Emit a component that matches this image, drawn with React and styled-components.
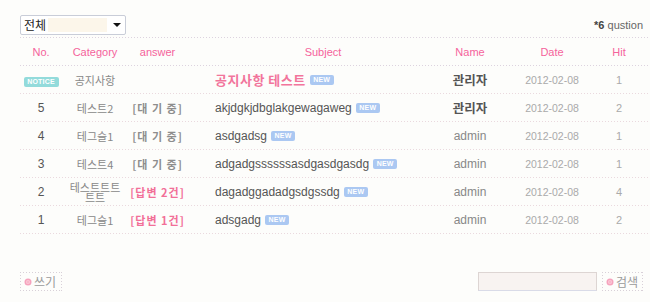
import React from 'react';
import styled, { createGlobalStyle } from 'styled-components';

const GlobalStyle = createGlobalStyle`
  html, body {
    margin: 0;
    padding: 0;
    background: #fdfdfb;
  }
  body {
    font-family: "Liberation Sans", "Noto Sans CJK KR", sans-serif;
    font-size: 12px;
    color: #555;
  }
`;

const dots = color => `linear-gradient(to right, ${color} 1px, transparent 1px)`;

const Page = styled.div`
  width: 628px;
  padding: 15px 2px 0 20px;
`;

const TopBar = styled.div`
  display: flex;
  justify-content: space-between;
  align-items: center;
  height: 20px;
  padding-right: 5px;
  margin-bottom: 2px;
`;

const FakeSelect = styled.div`
  box-sizing: border-box;
  width: 106px;
  height: 20px;
  border: 1px solid #c9cdd8;
  border-radius: 2px;
  background: #fff;
  display: flex;
  align-items: center;
  padding: 0 4px 0 3px;
  font-family: "Noto Sans CJK KR", sans-serif;
  font-size: 12px;
  color: #222;
`;

const SelectLabel = styled.span`
  flex-shrink: 0;
  white-space: nowrap;
  width: 24px;
  line-height: 14px;
`;

const SelectFill = styled.span`
  flex: 1;
  height: 14px;
  background: #fcf6ea;
  margin-right: 6px;
`;

const Arrow = styled.span`
  width: 0;
  height: 0;
  border-left: 4px solid transparent;
  border-right: 4px solid transparent;
  border-top: 4px solid #111;
`;

const Count = styled.div`
  font-size: 11px;
  color: #666;
  b {
    color: #444;
    font-weight: bold;
  }
`;

const Table = styled.div`
  background: ${dots('#ddd3df')} repeat-x top left / 3px 1px;
  padding-top: 1px;
`;

const Row = styled.div`
  display: grid;
  grid-template-columns: 42px 66px 59px 253px 60px 104px 30px;
  align-items: center;
  height: 27px;
  padding-bottom: 1px;
  background: ${p => dots(p.$head ? '#ddd3df' : '#ead9de')} repeat-x bottom left / 3px 1px;
`;

const HeadCell = styled.div`
  text-align: center;
  color: #f5639b;
  font-size: 11px;
  padding-left: ${p => p.$pad || 0}px;
`;

const Cell = styled.div`
  text-align: center;
  color: ${p => p.$color || '#777'};
  font-size: ${p => p.$size || 12}px;
  white-space: nowrap;
`;

const NameText = styled.div`
  text-align: center;
  white-space: nowrap;
  color: ${p => (p.$admin ? '#888' : '#555')};
  font-size: ${p => (p.$admin ? 12 : 12.5)}px;
  font-weight: ${p => (p.$admin ? 'normal' : 'bold')};
  font-family: ${p => (p.$admin ? 'inherit' : '"Noto Sans CJK KR", sans-serif')};
`;

const Category = styled.div`
  text-align: center;
  color: #888;
  font-family: "Noto Sans CJK KR", sans-serif;
  font-size: 11px;
  line-height: 10px;
  padding: 0 3px;
  word-break: break-all;
`;

const Answer = styled.div`
  text-align: center;
  font-family: "Noto Sans CJK KR", sans-serif;
  font-size: 11px;
  font-weight: bold;
  letter-spacing: 1px;
  color: ${p => (p.$done ? '#f26f98' : '#8d8d8d')};
  white-space: nowrap;
`;

const Subject = styled.div`
  display: flex;
  align-items: center;
  gap: 4px;
  padding-left: 28px;
  white-space: nowrap;
  color: ${p => (p.$notice ? '#f2759c' : '#555')};
  font-size: ${p => (p.$notice ? 13 : 12)}px;
  letter-spacing: ${p => (p.$notice ? 0.5 : 0)}px;
  font-weight: ${p => (p.$notice ? 'bold' : 'normal')};
  font-family: ${p => (p.$notice ? '"Noto Sans CJK KR", sans-serif' : 'inherit')};
`;

const Badge = styled.span`
  display: inline-flex;
  align-items: center;
  justify-content: center;
  height: 10px;
  width: ${p => p.$w}px;
  border-radius: 2px;
  background: ${p => p.$bg};
  color: #fff;
  font-family: "Liberation Sans", sans-serif;
  font-size: 7px;
  font-weight: bold;
  letter-spacing: 0.2px;
  line-height: 10px;
`;

const Footer = styled.div`
  display: flex;
  justify-content: space-between;
  align-items: center;
  margin-top: 38px;
  padding-right: 5px;
`;

const SearchGroup = styled.div`
  display: flex;
  align-items: center;
  gap: 5px;
`;

const SearchInput = styled.div`
  box-sizing: border-box;
  width: 119px;
  height: 19px;
  border: 1px solid #ddd5d3;
  border-bottom-color: #d9dbe8;
  background: #f8f3f1;
`;

const DotButton = styled.div`
  box-sizing: border-box;
  height: 19px;
  width: ${p => p.$w}px;
  display: flex;
  align-items: center;
  gap: 2px;
  padding-left: 4px;
  font-family: "Noto Sans CJK KR", sans-serif;
  font-size: 12px;
  color: #9a9a9a;
  background:
    ${dots('#d8d0d8')} repeat-x top left / 3px 1px,
    ${dots('#d8d0d8')} repeat-x bottom left / 3px 1px,
    linear-gradient(to bottom, #d8d0d8 1px, transparent 1px) repeat-y top left / 1px 3px,
    linear-gradient(to bottom, #d8d0d8 1px, transparent 1px) repeat-y top right / 1px 3px;
`;

const Bullet = () => (
  <svg width="8" height="8" viewBox="0 0 8 8">
    <circle cx="4" cy="4" r="3.5" fill="#f6a3bd" />
    <rect x="2.5" y="2.5" width="3" height="3" fill="#fde3ea" />
    <rect x="3.3" y="3.3" width="1.4" height="1.4" fill="#f38aaa" />
  </svg>
);

const NewBadge = () => <Badge $w={24} $bg="#abc8f2">NEW</Badge>;

const rows = [
  { no: 5, cat: '테스트2', answer: '[대 기 중]', subject: 'akjdgkjdbglakgewagaweg', name: '관리자', hit: 2 },
  { no: 4, cat: '테그슬1', answer: '[대 기 중]', subject: 'asdgadsg', name: 'admin', hit: 1 },
  { no: 3, cat: '테스트4', answer: '[대 기 중]', subject: 'adgadgssssssasdgasdgasdg', name: 'admin', hit: 1 },
  { no: 2, cat: '테스트트트트트', answer: '[답변 2건]', done: true, subject: 'dagadggadadgsdgssdg', name: 'admin', hit: 4 },
  { no: 1, cat: '테그슬1', answer: '[답변 1건]', done: true, subject: 'adsgadg', name: 'admin', hit: 2 },
];

export default function App() {
  return (
    <Page>
      <GlobalStyle />
      <TopBar>
        <FakeSelect>
          <SelectLabel>전체</SelectLabel>
          <SelectFill />
          <Arrow />
        </FakeSelect>
        <Count>
          <b>*6</b> qustion
        </Count>
      </TopBar>

      <Table>
        <Row $head>
          <HeadCell>No.</HeadCell>
          <HeadCell>Category</HeadCell>
          <HeadCell>answer</HeadCell>
          <HeadCell $pad={19}>Subject</HeadCell>
          <HeadCell>Name</HeadCell>
          <HeadCell>Date</HeadCell>
          <HeadCell>Hit</HeadCell>
        </Row>

        <Row>
          <Cell>
            <Badge $w={35} $bg="#93dbdb">NOTICE</Badge>
          </Cell>
          <Category>공지사항</Category>
          <Answer />
          <Subject $notice>
            공지사항 테스트 <NewBadge />
          </Subject>
          <NameText>관리자</NameText>
          <Cell $color="#aaa" $size={10.5}>2012-02-08</Cell>
          <Cell $color="#aaa" $size={11}>1</Cell>
        </Row>

        {rows.map(r => (
          <Row key={r.no}>
            <Cell $color="#555">{r.no}</Cell>
            <Category>{r.cat}</Category>
            <Answer $done={r.done}>{r.answer}</Answer>
            <Subject>
              {r.subject} <NewBadge />
            </Subject>
            <NameText $admin={r.name === 'admin'}>{r.name}</NameText>
            <Cell $color="#aaa" $size={10.5}>2012-02-08</Cell>
            <Cell $color="#aaa" $size={11}>{r.hit}</Cell>
          </Row>
        ))}
      </Table>

      <Footer>
        <DotButton $w={42}>
          <Bullet />
          쓰기
        </DotButton>
        <SearchGroup>
          <SearchInput />
          <DotButton $w={41}>
            <Bullet />
            검색
          </DotButton>
        </SearchGroup>
      </Footer>
    </Page>
  );
}
